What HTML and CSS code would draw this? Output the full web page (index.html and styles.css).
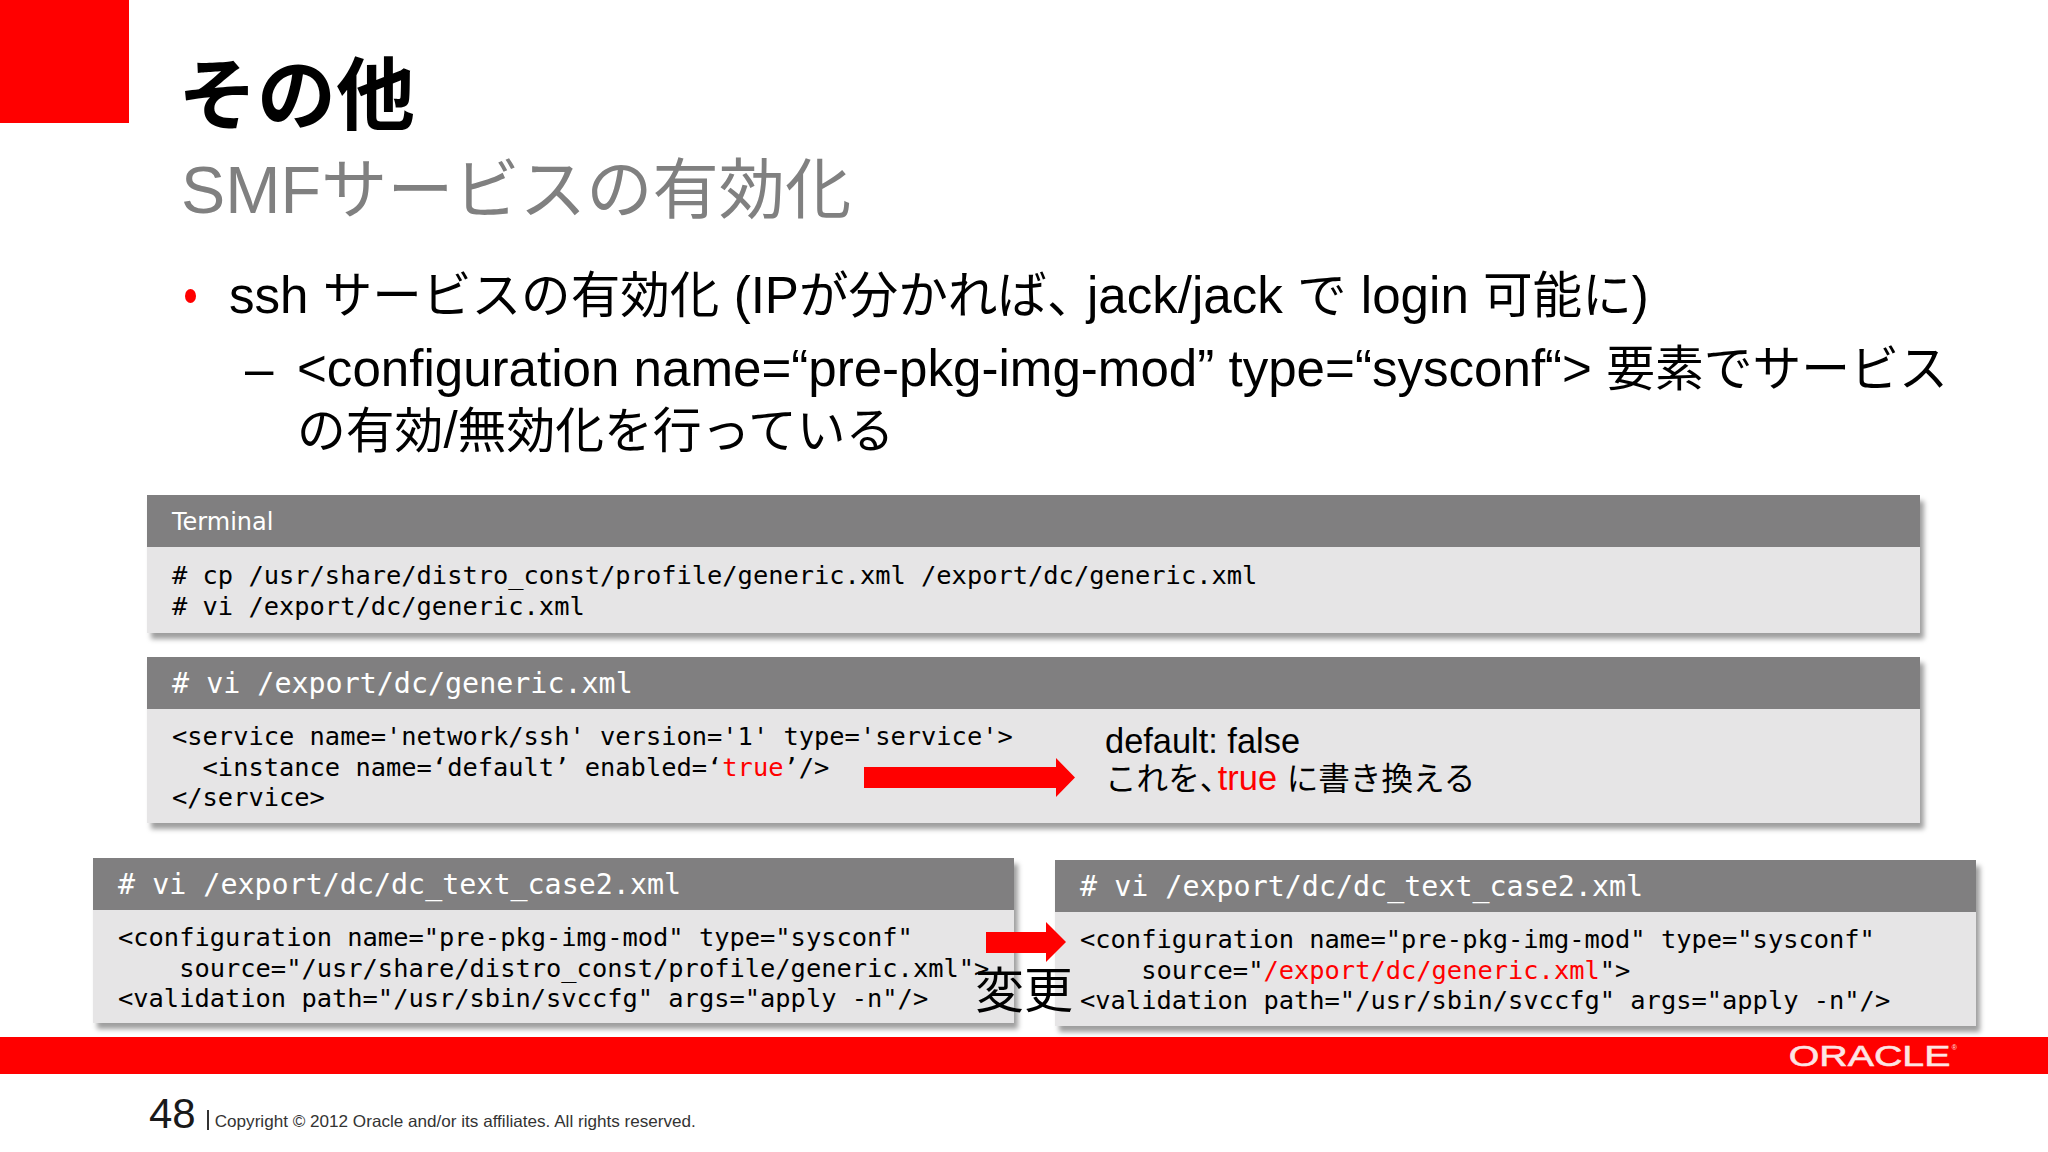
FILE: index.html
```html
<!DOCTYPE html>
<html lang="ja">
<head>
<meta charset="utf-8">
<title>その他</title>
<link rel="stylesheet" href="styles.css">
</head>
<body>
<main class="slide">
  <header class="head">
    <div class="corner"></div>
    <div class="titles">
      <h1 class="title">その他</h1>
      <h2 class="subtitle">SMFサービスの有効化</h2>
    </div>
  </header>
  <section class="points">
    <div class="point"><span class="dot"></span><span class="point-text">ssh <span class="ja ja-main">サービスの有効化</span> (IP<span class="ja ja-main">が分かれば<span class="comma">、</span></span>jack/jack <span class="ja ja-main">で</span> login <span class="ja ja-main">可能に</span>)</span></div>
    <div class="subpoint"><span class="dash">–</span><span class="sub-text">&lt;configuration name=“pre-pkg-img-mod” type=“sysconf“&gt; <span class="ja">要素でサービス</span><br><span class="ja">の有効</span>/<span class="ja">無効化を行っている</span></span></div>
  </section>
  <section class="wide">
    <article class="panel">
      <div class="bar bar-small">Terminal</div>
      <pre class="code h86"># cp /usr/share/distro_const/profile/generic.xml /export/dc/generic.xml
# vi /export/dc/generic.xml</pre>
    </article>
    <article class="panel">
      <div class="bar"># vi /export/dc/generic.xml</div>
      <div class="split">
        <pre class="code h114 split-code">&lt;service name='network/ssh' version='1' type='service'&gt;
  &lt;instance name=‘default’ enabled=‘<span class="hot">true</span>’/&gt;
&lt;/service&gt;</pre>
        <div class="note">default: false<br><span class="note-ja">これを<span class="comma">、</span></span><span class="hot">true</span> <span class="note-ja">に書き換える</span></div>
      </div>
    </article>
  </section>
  <section class="pair">
    <article class="panel half">
      <div class="bar"># vi /export/dc/dc_text_case2.xml</div>
      <pre class="code h113">&lt;configuration name="pre-pkg-img-mod" type="sysconf"
    source="/usr/share/distro_const/profile/generic.xml"&gt;
&lt;validation path="/usr/sbin/svccfg" args="apply -n"/&gt;</pre>
    </article>
    <article class="panel half lower">
      <div class="bar"># vi /export/dc/dc_text_case2.xml</div>
      <pre class="code h114">&lt;configuration name="pre-pkg-img-mod" type="sysconf"
    source="<span class="hot">/export/dc/generic.xml</span>"&gt;
&lt;validation path="/usr/sbin/svccfg" args="apply -n"/&gt;</pre>
    </article>
  </section>
  <div class="band">
    <span class="logo-text">ORACLE</span>
    <span class="logo-mark">®</span>
  </div>
  <footer class="foot">
    <span class="page">48</span>
    <span class="rule"></span>
    <span class="copy">Copyright © 2012 Oracle and/or its affiliates. All rights reserved.</span>
  </footer>
  <svg class="arrow arrow-long" viewBox="0 0 211 39" width="211" height="39"><path d="M0 9H192V0L211 19.5L192 39V30H0Z"/></svg>
  <svg class="arrow arrow-short" viewBox="0 0 80 40" width="80" height="40"><path d="M0 10H60V0L80 20L60 40V31H0Z"/></svg>
  <div class="change">変更</div>
</main>
</body>
</html>
```
FILE: styles.css
```css
* { box-sizing: border-box; }
html, body { margin: 0; padding: 0; background: #fff; }
.slide {
  position: relative;
  width: 2048px;
  height: 1152px;
  overflow: hidden;
  background: #fff;
  color: #000;
  font-family: "Liberation Sans", "Noto Sans CJK JP", sans-serif;
}
.head { display: flex; align-items: flex-start; }
.corner { flex: 0 0 129px; height: 123px; background: #f00; }
.titles { margin-left: 52px; padding-top: 51px; }
.title { margin: 0 0 0 -3px; font-size: 79px; line-height: 92px; font-weight: 700; }
.subtitle { margin: 9px 0 0; font-size: 66.3px; line-height: 76px; font-weight: 400; color: #808080; white-space: nowrap; }
.points { margin-top: 38px; font-size: 51.1px; line-height: 60px; white-space: nowrap; }
.ja { font-size: 48.8px; }
.ja-main { font-size: 49.6px; }
.comma { display: inline-block; width: 40px; text-align: left; }
.point { display: flex; align-items: center; padding-left: 185px; }
.dot { flex: 0 0 11px; height: 14px; border-radius: 50%; background: #f00; }
.point-text { margin-left: 33px; }
.subpoint { display: flex; margin-top: 12px; padding-left: 245px; line-height: 62px; }
.dash { flex: 0 0 53px; }
.sub-text { margin-left: -1px; }
.wide { display: flex; flex-direction: column; gap: 24px; margin: 33px 0 0 147px; width: 1773px; }
.panel { background: #e6e5e6; box-shadow: 4px 6px 5px rgba(0, 0, 0, .38); }
.bar {
  height: 52px;
  padding-left: 25px;
  background: #807f80;
  color: #fff;
  font-family: "DejaVu Sans Mono", monospace;
  font-size: 28.35px;
  line-height: 53px;
  white-space: pre;
}
.bar-small { font-family: "DejaVu Sans", sans-serif; font-size: 24px; line-height: 55px; }
.code {
  margin: 0;
  padding: 12px 0 0 25px;
  font-family: "DejaVu Sans Mono", "Noto Sans CJK JP", monospace;
  font-size: 25.4px;
  line-height: 30.5px;
  color: #000;
}
.h86 { height: 86px; padding-top: 13px; }
.h113 { height: 113px; }
.h114 { height: 114px; }
.hot { color: #f00; }
.split { display: flex; }
.split-code { flex: 0 0 958px; }
.note { padding-top: 14px; font-size: 34.4px; line-height: 37px; white-space: nowrap; }
.note-ja { font-size: 31.6px; }
.note-ja .comma { width: 18px; }
.pair { display: flex; gap: 41px; margin: 35px 0 0 93px; height: 168px; align-items: flex-start; }
.half { flex: 0 0 921px; }
.lower { margin-top: 2px; }
.band { display: flex; align-items: center; justify-content: flex-end; height: 37px; margin-top: 11px; padding-right: 91px; background: #f00; color: #fde4e4; }
.logo-text { font-size: 30px; line-height: 30px; -webkit-text-stroke: .6px #fde4e4; transform: scaleX(1.31); transform-origin: right center; }
.logo-mark { align-self: flex-start; margin: 7px 0 0 1px; font-size: 7px; line-height: 8px; }
.foot { display: flex; align-items: flex-end; margin-top: 16px; padding-left: 149px; height: 48px; }
.page { font-size: 42px; line-height: 48px; color: #1a1a1a; }
.rule { width: 2px; height: 20px; margin: 0 6px 8px 11px; background: #333; }
.copy { font-size: 17.13px; line-height: 22px; margin-bottom: 5px; color: #333; white-space: nowrap; }
.arrow { position: absolute; fill: #f00; }
.arrow-long { left: 864px; top: 758px; }
.arrow-short { left: 986px; top: 922px; }
.change { position: absolute; left: 975px; top: 955px; font-size: 49px; line-height: 72px; white-space: nowrap; }
```
